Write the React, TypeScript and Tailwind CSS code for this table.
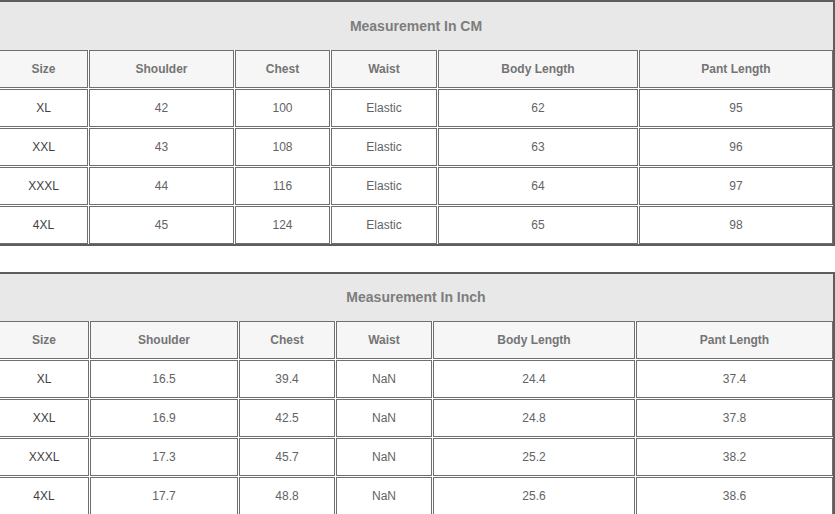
import React from "react";

// column widths for each table (px, cell box incl. its 1px border)
const cmCols = ["w-[89px]", "w-[145px]", "w-[95px]", "w-[106px]", "w-[200px]", "w-[194px]"];
const inchCols = ["w-[90px]", "w-[148px]", "w-[96px]", "w-[96px]", "w-[202px]", "w-[197px]"];

const headers = ["Size", "Shoulder", "Chest", "Waist", "Body Length", "Pant Length"];

const cmRows = [
  ["XL", "42", "100", "Elastic", "62", "95"],
  ["XXL", "43", "108", "Elastic", "63", "96"],
  ["XXXL", "44", "116", "Elastic", "64", "97"],
  ["4XL", "45", "124", "Elastic", "65", "98"],
];

const inchRows = [
  ["XL", "16.5", "39.4", "NaN", "24.4", "37.4"],
  ["XXL", "16.9", "42.5", "NaN", "24.8", "37.8"],
  ["XXXL", "17.3", "45.7", "NaN", "25.2", "38.2"],
  ["4XL", "17.7", "48.8", "NaN", "25.6", "38.6"],
];

function SizeTable({ title, cols, rows, titleH }: { title: string; cols: string[]; rows: string[][]; titleH: string }) {
  return (
    <div className="w-[838px] -ml-[3px] border-2 border-[#5e5e5e] bg-white">
      <div className={`${titleH} bg-[#e8e8e8] flex items-center justify-center text-[14px] font-bold text-[#7d7d7d]`}>
        {title}
      </div>
      <div className="flex flex-col gap-[1px]">
        <div className="flex gap-[1px]">
          {headers.map((h, i) => (
            <div
              key={h}
              className={`${cols[i]} h-[38px] shrink-0 border border-[#6f6f6f] bg-[#f6f6f6] flex items-center justify-center text-[12px] font-bold text-[#747474]`}
            >
              {h}
            </div>
          ))}
        </div>
        {rows.map((r) => (
          <div key={r[0]} className="flex gap-[1px]">
            {r.map((v, i) => (
              <div
                key={i}
                className={`${cols[i]} h-[38px] shrink-0 border border-[#6f6f6f] bg-white flex items-center justify-center text-[12px] ${
                  i === 0 ? "text-[#3f3f3f]" : "text-[#636363]"
                }`}
              >
                {v}
              </div>
            ))}
          </div>
        ))}
      </div>
    </div>
  );
}

export default function App() {
  return (
    <div className="w-[835px] h-[514px] overflow-hidden bg-white font-['Liberation_Sans',Arial,sans-serif]">
      <SizeTable title="Measurement In CM" cols={cmCols} rows={cmRows} titleH="h-[48px]" />
      <div className="mt-[26px]">
        <SizeTable title="Measurement In Inch" cols={inchCols} rows={inchRows} titleH="h-[47px]" />
      </div>
    </div>
  );
}
